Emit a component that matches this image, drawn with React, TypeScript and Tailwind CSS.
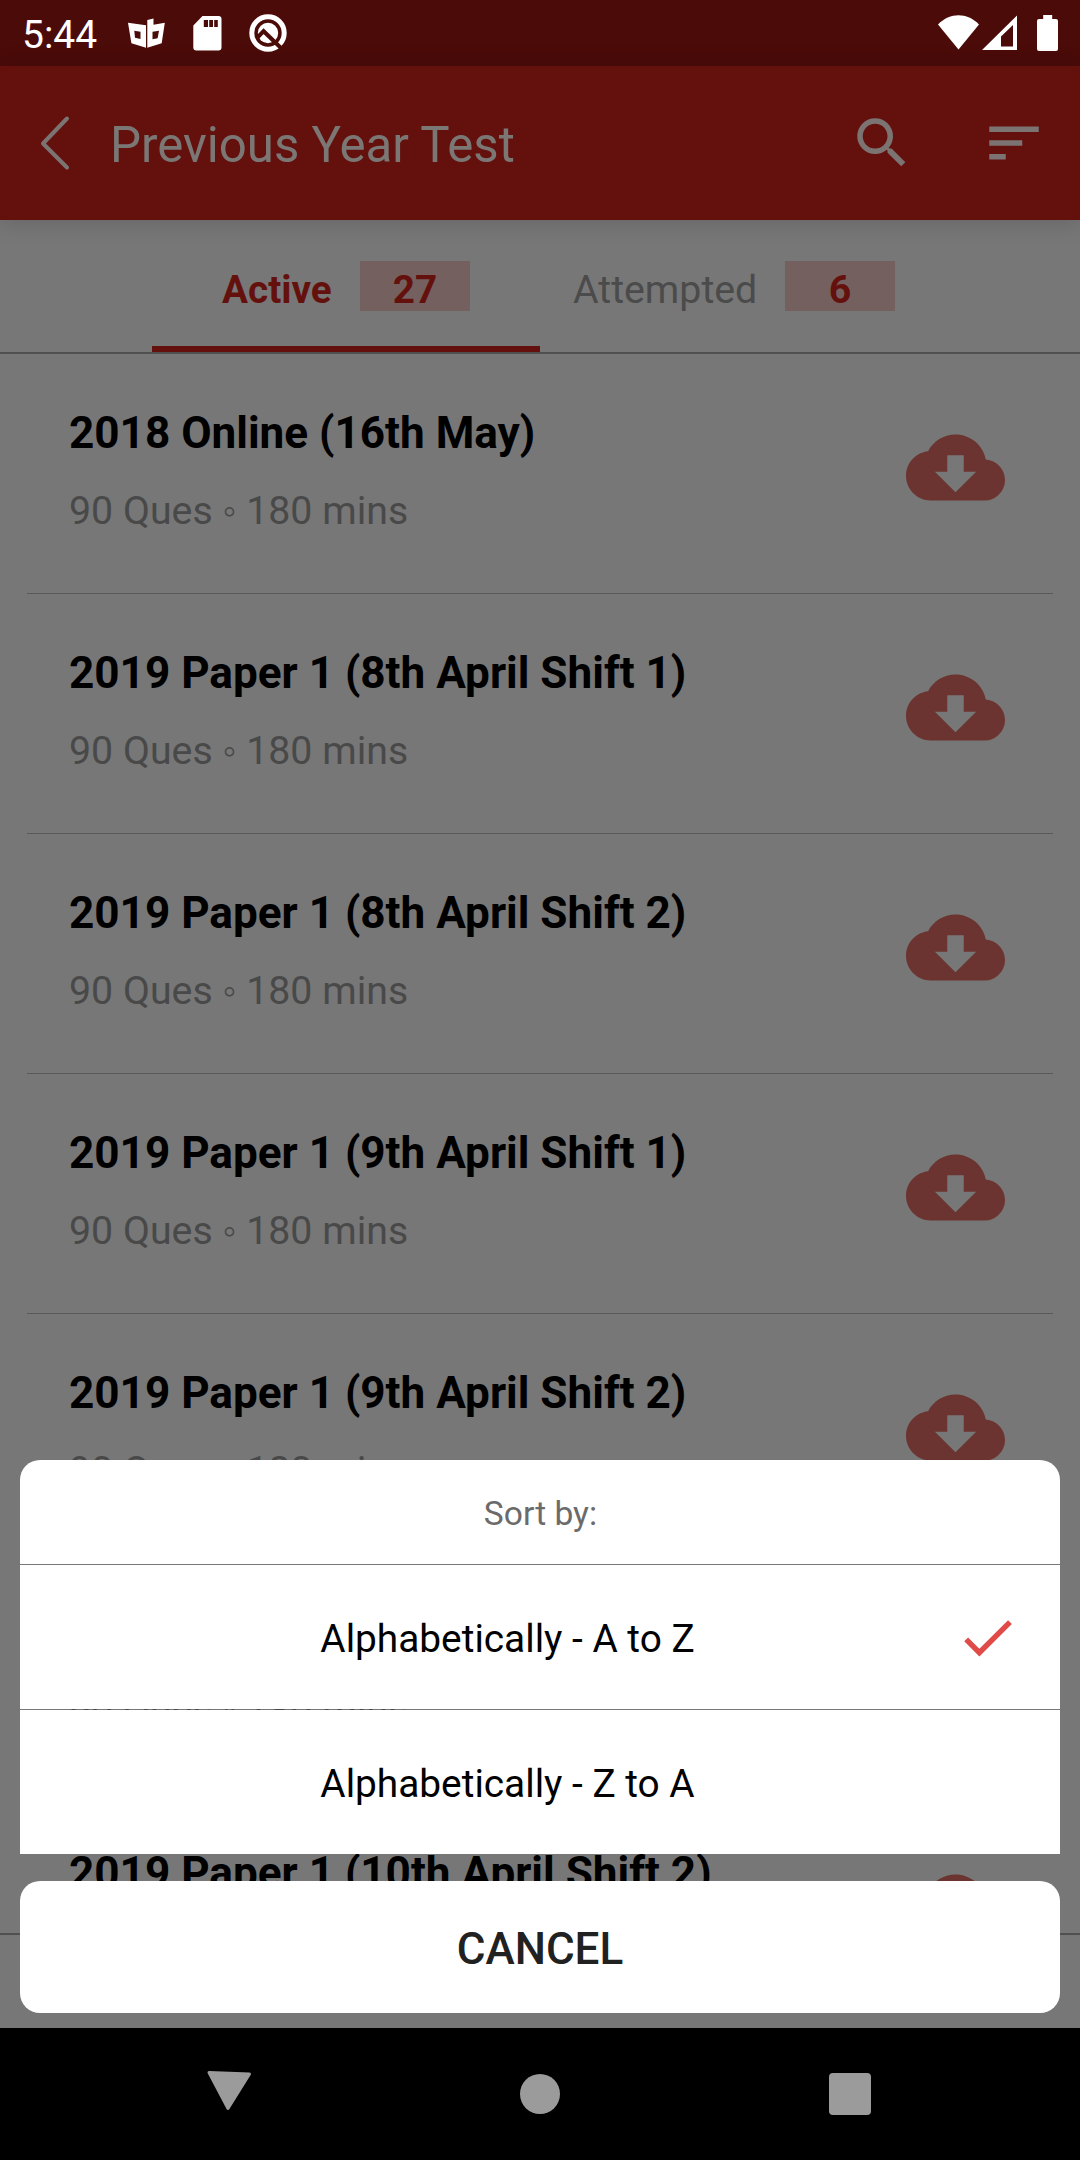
const tests = [
  "2018 Online (16th May)",
  "2019 Paper 1 (8th April Shift 1)",
  "2019 Paper 1 (8th April Shift 2)",
  "2019 Paper 1 (9th April Shift 1)",
  "2019 Paper 1 (9th April Shift 2)",
  "2019 Paper 1 (10th April Shift 1)",
  "2019 Paper 1 (10th April Shift 2)",
];

const sortOptions = [
  { label: "Alphabetically - A to Z", selected: true },
  { label: "Alphabetically - Z to A", selected: false },
];

function StatusBar() {
  return (
    <div className="flex h-[66px] shrink-0 items-start justify-between bg-[#4a0b09] pr-[22px] pl-[22px] text-white">
      <div className="flex items-start">
        <span className="w-[106px] pt-[10px] text-[39px] leading-[50px]">5:44</span>
        <svg className="mt-[18px] h-[30px] w-[37px]" viewBox="0 0 37 30" fill="currentColor" fillRule="evenodd">
          <path d="M0 4.7 18 7.3V29.7L3.4 25.3ZM6.3 12.7 7 19.7 12.5 21V13.7Z" />
          <path d="M19.3 2 25.5 0.4V6.7L36.8 4.7 33.7 25.3 19.3 29.7ZM24.5 13.7V21.3L29.6 20.3 31 12.7Z" />
        </svg>
        <svg className="mt-4 ml-7 h-[35px] w-[29px]" viewBox="0 0 29 35" fill="currentColor" fillRule="evenodd">
          <path d="M9.5 0H25.5A3 3 0 0 1 28.5 3V31.5A3 3 0 0 1 25.5 34.5H3.3A3 3 0 0 1 0.3 31.5V9.5ZM10.8 4V11H15V4ZM16.2 4V11H20V4ZM21.2 4V11H24.8V4Z" />
        </svg>
        <svg className="mt-[14px] ml-[27px] h-[39px] w-[38px]" viewBox="0 0 38 39" fill="none">
          <circle cx="19" cy="19" r="16.2" stroke="currentColor" strokeWidth="5" />
          <circle cx="19" cy="19" r="10.2" fill="currentColor" />
          <path d="M8.5 23.5 14.6 17.2 32 34" stroke="#4a0b09" strokeWidth="4" />
        </svg>
      </div>
      <div className="flex pt-[15px]">
        <svg className="h-9 w-[41px]" viewBox="0 0 41 36" fill="currentColor">
          <path d="M0 9.5C12 -2.8 29 -2.8 41 9.5L20.5 34.5Z" />
        </svg>
        <svg className="ml-[3px] h-9 w-[35px]" viewBox="0 0 35 36" fill="currentColor" fillRule="evenodd">
          <path d="M0 35 35 0.5V35ZM19 31.5H31V10L19 21.5Z" />
        </svg>
        <svg className="ml-5 h-9 w-[21px]" viewBox="0 0 21 36" fill="currentColor">
          <path d="M6.2 0H15.2V4H19A2 2 0 0 1 21 6V34A2 2 0 0 1 19 36H2A2 2 0 0 1 0 34V6A2 2 0 0 1 2 4H6.2Z" />
        </svg>
      </div>
    </div>
  );
}

function Header() {
  return (
    <header className="relative z-10 flex h-[154px] shrink-0 items-center bg-[#64110e] pr-[33px] pl-[38px] text-[#7b7472] shadow-[0_2px_22px_rgba(0,0,0,0.16)]">
      <svg className="h-[56px] w-[34px]" viewBox="0 0 34 56" fill="none" stroke="currentColor" strokeWidth="4" strokeLinecap="round" strokeLinejoin="round">
        <path d="M29 3.5 5 28.5 29 52.5" />
      </svg>
      <h1 className="ml-[38px] flex-1 pt-[3px] text-[49.2px] leading-[60px] text-[#7b7775]">Previous Year Test</h1>
      <svg className="h-[66px] w-[66px]" viewBox="0 0 24 24" fill="currentColor">
        <path d="M15.5 14h-.79l-.28-.27A6.471 6.471 0 0 0 16 9.5 6.5 6.5 0 1 0 9.5 16c1.61 0 3.09-.59 4.23-1.57l.27.28v.79l5 4.99L20.49 19l-4.99-5zm-6 0C7.01 14 5 11.99 5 9.5S7.01 5 9.5 5 14 7.01 14 9.5 11.99 14 9.5 14z" />
      </svg>
      <svg className="ml-[66px] h-[66px] w-[66px]" viewBox="0 0 24 24" fill="currentColor">
        <path d="M3 18h6v-2H3v2zM3 6v2h18V6H3zm0 7h12v-2H3v2z" />
      </svg>
    </header>
  );
}

function Tabs() {
  return (
    <div className="flex h-[134px] shrink-0 items-start border-b-2 border-[#505050] pl-[152px] text-[39.3px] leading-[50px]">
      <div className="flex h-[132px] w-[388px] items-start border-b-6 border-[#64110e] pt-[41px] pl-[70px] font-bold text-[#64110e]">
        <span className="w-[138px] pt-1 text-[38.7px]">Active</span>
        <span className="h-[50px] w-[110px] bg-[#756060] pt-1 text-center text-[38.7px]">27</span>
      </div>
      <div className="flex h-[132px] flex-1 items-start pt-[41px] pl-[33px]">
        <span className="w-[212px] pt-1 text-[#4b4b4b]">Attempted</span>
        <span className="h-[50px] w-[110px] bg-[#756060] pt-1 text-center font-bold text-[#64110e]">6</span>
      </div>
    </div>
  );
}

function TestRow({ title }: { title: string }) {
  return (
    <div className="mx-[27px] flex h-60 shrink-0 items-start border-b border-[#5a5a5a] pr-12 pl-[42px]">
      <div className="flex-1 pt-[54px] whitespace-nowrap">
        <p className="text-[44.1px] leading-[50px] font-bold text-black">{title}</p>
        <p className="mt-7 text-[39.3px] leading-[50px] text-[#494949]">90 Ques ◦ 180 mins</p>
      </div>
      <svg className="mt-16 h-[99px] w-[99px]" viewBox="0 0 24 24" fill="#6b3431">
        <path d="M19.35 10.04C18.67 6.59 15.64 4 12 4 9.11 4 6.6 5.64 5.35 8.04 2.34 8.36 0 10.91 0 14c0 3.31 2.69 6 6 6h13c2.76 0 5-2.24 5-5 0-2.64-2.05-4.78-4.65-4.96zM17 13l-5 5-5-5h3V9h4v4h3z" />
      </svg>
    </div>
  );
}

function SortSheet() {
  return (
    <div className="absolute inset-x-5 top-[1460px] text-center">
      {/* 1px gaps let the dimmed list show through as separators */}
      <div className="flex flex-col gap-px">
        <div className="h-[104px] rounded-t-[20px] bg-white pt-[29px] pl-px text-[33.6px] leading-[50px] text-[#6b6b6b]">Sort by:</div>
        {sortOptions.map((option) => (
          <div key={option.label} className="flex h-36 items-center bg-white pr-10 text-black">
            <span className="flex-1 pt-1 pl-10 text-[38.8px] leading-[50px]">{option.label}</span>
            <span className="flex w-[65px] justify-center">
              {option.selected && (
                <svg className="h-[65px] w-[65px]" viewBox="0 0 24 24" fill="#e04b48">
                  <path d="M9 16.17 4.83 12l-1.42 1.41L9 19 21 7l-1.41-1.41z" />
                </svg>
              )}
            </span>
          </div>
        ))}
      </div>
      <button className="mt-[27px] flex h-[132px] w-full items-center justify-center rounded-[20px] bg-white pt-1 text-[44px] font-medium text-[#212121]">
        CANCEL
      </button>
    </div>
  );
}

function NavBar() {
  return (
    <nav className="flex h-[132px] shrink-0 items-start bg-black pl-[206px]">
      <svg className="mt-[42px] h-[42px] w-[47px]" viewBox="0 0 47 42" fill="#9b9b9b" stroke="#9b9b9b" strokeWidth="3" strokeLinejoin="round">
        <path d="M3 2.5 43.5 4 22 38.5Z" />
      </svg>
      <span className="mt-[46px] ml-[267px] h-10 w-10 rounded-full bg-[#9b9b9b]" />
      <span className="mt-[45px] ml-[269px] h-[42px] w-[42px] rounded-[4px] bg-[#9b9b9b]" />
    </nav>
  );
}

export default function App() {
  return (
    <div className="relative flex h-[2160px] w-[1080px] flex-col overflow-hidden bg-[#777777] font-['Roboto',sans-serif]">
      <StatusBar />
      <Header />
      <Tabs />
      <main className="flex h-[1579px] shrink-0 flex-col overflow-hidden">
        {tests.map((title) => (
          <TestRow key={title} title={title} />
        ))}
      </main>
      <div className="h-[95px] shrink-0 border-t-2 border-[#505050]" />
      <NavBar />
      <SortSheet />
    </div>
  );
}
